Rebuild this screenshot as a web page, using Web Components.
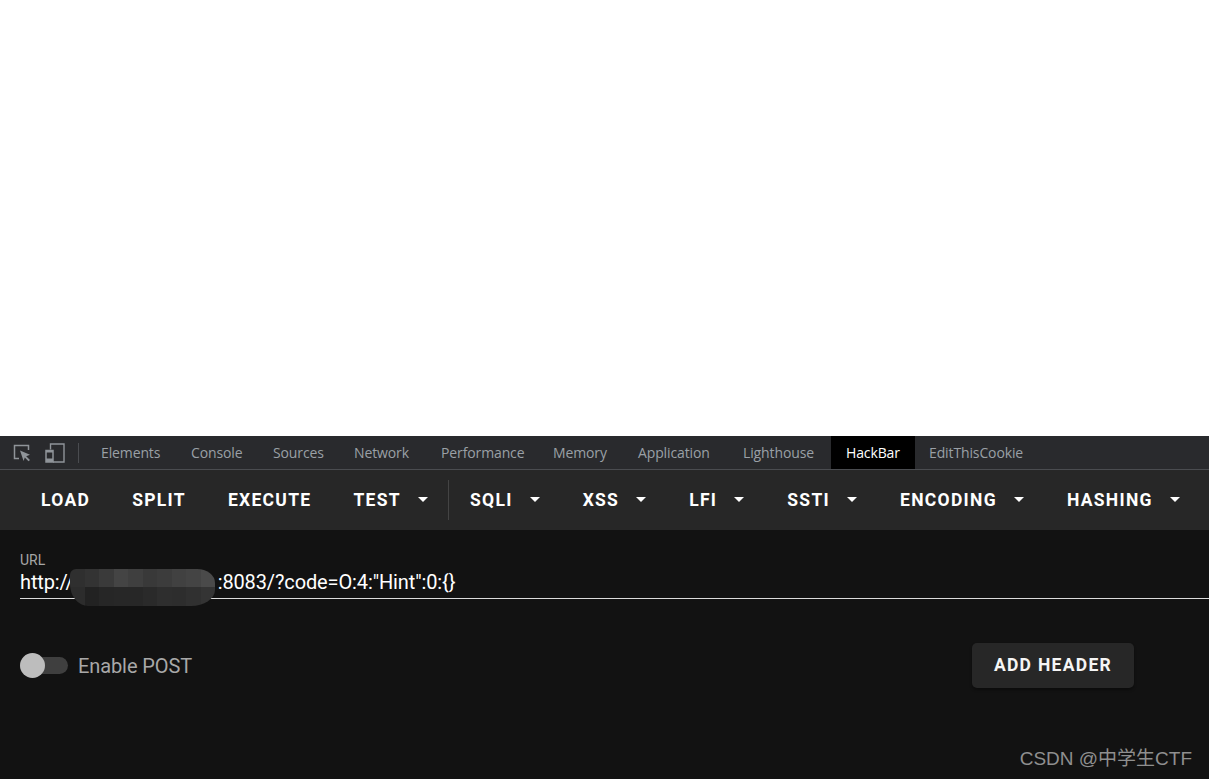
<!DOCTYPE html>
<html><head><meta charset="utf-8"><style>
html,body{margin:0;padding:0;height:100%;overflow:hidden;background:#fff}
body{display:flex;flex-direction:column;height:779px}
.top{flex:0 0 436px}
</style></head><body>
<div class="top"></div>
<dev-tabs></dev-tabs>
<hack-toolbar>
<hb-btn style="--l:41px">LOAD</hb-btn><hb-btn style="--l:42px">SPLIT</hb-btn><hb-btn style="--l:42px">EXECUTE</hb-btn><hb-btn style="--l:42px" menu>TEST</hb-btn><hb-sep></hb-sep><hb-btn style="--l:21px" menu>SQLI</hb-btn><hb-btn style="--l:43px" menu>XSS</hb-btn><hb-btn style="--l:43px" menu>LFI</hb-btn><hb-btn style="--l:43px" menu>SSTI</hb-btn><hb-btn style="--l:43px" menu>ENCODING</hb-btn><hb-btn style="--l:43px" menu>HASHING</hb-btn>
</hack-toolbar>
<hack-panel></hack-panel>
<script>
const def=(n,html,cls={})=>customElements.define(n,class extends HTMLElement{constructor(){super();this.attachShadow({mode:'open'}).innerHTML=html}});
def('dev-tabs',`<style>
:host{display:flex;flex:0 0 33px;height:33px;background:#292a2d;border-bottom:1px solid #4a4c50;font:14px/33px "Open Sans",sans-serif;color:#9aa0a6;align-items:stretch;letter-spacing:-.12px}
svg{display:block}
.icons{display:flex;align-items:center;width:101px;flex:none;position:relative}
.i1{margin-left:13px}.i2{margin-left:14px}
.sep{width:1px;height:20px;background:#4a4c50;margin-left:13px}
.t{flex:none;white-space:nowrap}
.a{background:#000;color:#fff;padding:0 15px;box-sizing:border-box;width:84px}
</style>
<div class="icons">
<svg class="i1" width="18" height="18" viewBox="0 0 18 18" fill="none"><path d="M6 14.5H1.5V1.5H15.5V6" stroke="#8f9499" stroke-width="1.5"/><path d="M7 6.5L17 10.8L13.2 12.2L17 16L15.5 17.3L11.8 13.5L10.6 17Z" fill="#8f9499"/></svg>
<svg class="i2" width="20" height="20" viewBox="0 0 20 20" fill="none"><path d="M5.5 6.5V1H19V19H8" stroke="#8f9499" stroke-width="1.4"/><rect x="1" y="7.5" width="7" height="11.5" stroke="#8f9499" stroke-width="1.5"/><rect x="1" y="15.5" width="7" height="3.5" fill="#8f9499"/><rect x="1" y="7" width="7" height="2.5" fill="#8f9499"/></svg>
<div class="sep"></div></div>
<span class="t" style="width:90px">Elements</span><span class="t" style="width:82px">Console</span><span class="t" style="width:81px">Sources</span><span class="t" style="width:87px">Network</span><span class="t" style="width:112px">Performance</span><span class="t" style="width:85px">Memory</span><span class="t" style="width:105px">Application</span><span class="t" style="width:88px">Lighthouse</span><span class="t a">HackBar</span><span class="t" style="margin-left:14px">EditThisCookie</span>`);
def('hack-toolbar',`<style>:host{display:flex;flex:0 0 60px;height:60px;background:#272727;align-items:center;overflow:hidden}</style><slot></slot>`);
customElements.define('hb-btn',class extends HTMLElement{constructor(){super();const m=this.hasAttribute('menu');this.attachShadow({mode:'open'}).innerHTML=`<style>
:host{display:flex;align-items:center;flex:none;margin-left:var(--l);font:700 17.5px/20px Roboto,sans-serif;letter-spacing:1.3px;color:#fff;white-space:nowrap}
i{display:block;width:0;height:0;border:5px solid transparent;border-top-color:#fff;border-bottom:0;margin-left:17px;margin-top:-2px}
</style><slot></slot>${m?'<i></i>':''}`}
connectedCallback(){if(this.hasAttribute('menu')&&!this.shadowRoot.querySelector('i')){const i=document.createElement('i');this.shadowRoot.append(i)}}});
def('hb-sep',`<style>:host{display:block;flex:none;width:1px;height:40px;background:#444;margin-left:20px}</style>`);
const cells=[['#2f2f2f','#333','#3a3a3a','#444','#3f3f3f','#393939','#3c3c3c','#414141','#444','#4a4a4a'],['#2c2c2c','#222','#262626','#272727','#272727','#2a2a2a','#2e2e2e','#2d2d2d','#303030','#343434']].map(r=>r.map(c=>`<b style="background:${c}"></b>`).join('')).join('');
def('hack-panel',`<style>
:host{display:block;flex:1;background:#121212;position:relative;box-sizing:border-box;padding:22px 0 0 20px;font-family:Roboto,sans-serif;overflow:hidden}
.lab{font-size:14px;line-height:16px;color:#a6a6a6}
.url{font-size:20px;line-height:29px;height:30px;color:#fff;border-bottom:1px solid #dcdcdc;white-space:nowrap;letter-spacing:-.12px;margin-top:0;box-sizing:content-box}
.row{display:flex;align-items:center;margin-top:44px;height:45px;position:relative}
.track{width:48px;height:17px;border-radius:9px;background:#3f3f3f;position:relative;flex:none}
.thumb{position:absolute;left:0;top:-4px;width:25px;height:25px;border-radius:50%;background:#bdbdbd}
.lbl{margin-left:10px;font-size:20px;color:#a8a8a8;letter-spacing:-.1px}
.btn{margin-left:auto;margin-right:75px;width:162px;height:45px;border-radius:5px;background:#272727;color:#f5f5f5;font:700 17.5px/45px Roboto,sans-serif;letter-spacing:1.3px;text-align:center;box-shadow:0 2px 3px rgba(0,0,0,.35);flex:none}
.blur{position:absolute;left:70px;top:39px;width:145px;height:37px;display:grid;grid-template-columns:repeat(10,1fr);grid-template-rows:18px 19px;border-radius:6px 18px 24px 18px/6px 14px 16px 22px;overflow:hidden}
.blur b{display:block}
.wm{position:absolute;right:17px;bottom:8px;font:19px/24px "Liberation Sans","Noto Sans CJK SC",sans-serif;color:#8f8f8f;white-space:nowrap}
</style>
<div class="lab">URL</div>
<div class="url">http://<span style="display:inline-block;width:144px"></span>:8083/?code=O:4:"Hint":0:{}</div>
<div class="blur">${cells}</div>
<div class="row"><div class="track"><div class="thumb"></div></div><span class="lbl">Enable POST</span><div class="btn">ADD HEADER</div></div>
<div class="wm">CSDN @中学生CTF</div>`);
</script>
</body></html>
